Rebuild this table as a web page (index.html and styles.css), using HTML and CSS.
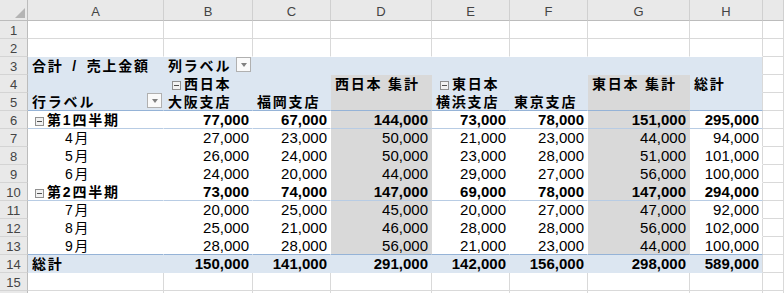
FILE: index.html
```html
<!DOCTYPE html>
<html lang="ja">
<head>
<meta charset="utf-8">
<title>ピボットテーブル</title>
<link rel="stylesheet" href="styles.css">
</head>
<body>
<div class="sheet">
  <div class="corner"><svg width="10" height="10" viewBox="0 0 10 10"><polygon points="10,0 10,10 0,10" fill="#b4b4b4"/></svg></div>
  <div class="ch">A</div><div class="ch">B</div><div class="ch">C</div><div class="ch">D</div><div class="ch">E</div><div class="ch">F</div><div class="ch">G</div><div class="ch">H</div><div class="ch"></div>

  <div class="rh">1</div>
  <div class="c"></div><div class="c"></div><div class="c"></div><div class="c"></div><div class="c"></div><div class="c"></div><div class="c"></div><div class="c"></div><div class="c"></div>

  <div class="rh">2</div>
  <div class="c nb"></div><div class="c nb"></div><div class="c nb"></div><div class="c nb"></div><div class="c nb"></div><div class="c nb"></div><div class="c nb"></div><div class="c nb"></div><div class="c"></div>

  <div class="rh">3</div>
  <div class="c pv blue lbl b sp">合計 / 売上金額</div>
  <div class="c pv blue lbl b fd"><span>列ラベル</span><span class="dd"></span></div>
  <div class="c pv blue"></div><div class="c pv blue"></div><div class="c pv blue"></div><div class="c pv blue"></div><div class="c pv blue"></div>
  <div class="c pv blue hr"></div>
  <div class="c"></div>

  <div class="rh">4</div>
  <div class="c pv blue"></div>
  <div class="c pv blue lbl b grp"><span class="tg"></span>西日本</div>
  <div class="c pv blue"></div>
  <div class="c pv gray lbl b">西日本 集計</div>
  <div class="c pv blue lbl b grp"><span class="tg"></span>東日本</div>
  <div class="c pv blue"></div>
  <div class="c pv gray lbl b">東日本 集計</div>
  <div class="c pv blue lbl b hr">総計</div>
  <div class="c"></div>

  <div class="rh">5</div>
  <div class="c pv blue lbl b fd ls"><span>行ラベル</span><span class="dd"></span></div>
  <div class="c pv blue lbl b ls">大阪支店</div>
  <div class="c pv blue lbl b ls">福岡支店</div>
  <div class="c pv gray ls"></div>
  <div class="c pv blue lbl b ls">横浜支店</div>
  <div class="c pv blue lbl b ls">東京支店</div>
  <div class="c pv gray ls"></div>
  <div class="c pv blue ls hr"></div>
  <div class="c"></div>

  <div class="rh">6</div>
  <div class="c pv lbl b q ll"><span class="tg"></span>第1四半期</div>
  <div class="c pv num b ll">77,000</div>
  <div class="c pv num b ll">67,000</div>
  <div class="c pv gray num b ll">144,000</div>
  <div class="c pv num b ll">73,000</div>
  <div class="c pv num b ll">78,000</div>
  <div class="c pv gray num b ll">151,000</div>
  <div class="c pv num b ll hr">295,000</div>
  <div class="c"></div>

  <div class="rh">7</div>
  <div class="c pv lbl m">4月</div>
  <div class="c pv num">27,000</div>
  <div class="c pv num">23,000</div>
  <div class="c pv gray num">50,000</div>
  <div class="c pv num">21,000</div>
  <div class="c pv num">23,000</div>
  <div class="c pv gray num">44,000</div>
  <div class="c pv num hr">94,000</div>
  <div class="c"></div>

  <div class="rh">8</div>
  <div class="c pv lbl m">5月</div>
  <div class="c pv num">26,000</div>
  <div class="c pv num">24,000</div>
  <div class="c pv gray num">50,000</div>
  <div class="c pv num">23,000</div>
  <div class="c pv num">28,000</div>
  <div class="c pv gray num">51,000</div>
  <div class="c pv num hr">101,000</div>
  <div class="c"></div>

  <div class="rh">9</div>
  <div class="c pv lbl m">6月</div>
  <div class="c pv num">24,000</div>
  <div class="c pv num">20,000</div>
  <div class="c pv gray num">44,000</div>
  <div class="c pv num">29,000</div>
  <div class="c pv num">27,000</div>
  <div class="c pv gray num">56,000</div>
  <div class="c pv num hr">100,000</div>
  <div class="c"></div>

  <div class="rh">10</div>
  <div class="c pv lbl b q ll"><span class="tg"></span>第2四半期</div>
  <div class="c pv num b ll">73,000</div>
  <div class="c pv num b ll">74,000</div>
  <div class="c pv gray num b ll">147,000</div>
  <div class="c pv num b ll">69,000</div>
  <div class="c pv num b ll">78,000</div>
  <div class="c pv gray num b ll">147,000</div>
  <div class="c pv num b ll hr">294,000</div>
  <div class="c"></div>

  <div class="rh">11</div>
  <div class="c pv lbl m">7月</div>
  <div class="c pv num">20,000</div>
  <div class="c pv num">25,000</div>
  <div class="c pv gray num">45,000</div>
  <div class="c pv num">20,000</div>
  <div class="c pv num">27,000</div>
  <div class="c pv gray num">47,000</div>
  <div class="c pv num hr">92,000</div>
  <div class="c"></div>

  <div class="rh">12</div>
  <div class="c pv lbl m">8月</div>
  <div class="c pv num">25,000</div>
  <div class="c pv num">21,000</div>
  <div class="c pv gray num">46,000</div>
  <div class="c pv num">28,000</div>
  <div class="c pv num">28,000</div>
  <div class="c pv gray num">56,000</div>
  <div class="c pv num hr">102,000</div>
  <div class="c"></div>

  <div class="rh">13</div>
  <div class="c pv lbl m ls">9月</div>
  <div class="c pv num ls">28,000</div>
  <div class="c pv num ls">28,000</div>
  <div class="c pv gray num ls">56,000</div>
  <div class="c pv num ls">21,000</div>
  <div class="c pv num ls">23,000</div>
  <div class="c pv gray num ls">44,000</div>
  <div class="c pv num ls hr">100,000</div>
  <div class="c"></div>

  <div class="rh">14</div>
  <div class="c pv blue lbl b">総計</div>
  <div class="c pv blue num b">150,000</div>
  <div class="c pv blue num b">141,000</div>
  <div class="c pv blue num b">291,000</div>
  <div class="c pv blue num b">142,000</div>
  <div class="c pv blue num b">156,000</div>
  <div class="c pv blue num b">298,000</div>
  <div class="c pv blue num b hr">589,000</div>
  <div class="c"></div>

  <div class="rh">15</div>
  <div class="c"></div><div class="c"></div><div class="c"></div><div class="c"></div><div class="c"></div><div class="c"></div><div class="c"></div><div class="c"></div><div class="c"></div>

  <div class="rh"></div>
  <div class="c"></div><div class="c"></div><div class="c"></div><div class="c"></div><div class="c"></div><div class="c"></div><div class="c"></div><div class="c"></div><div class="c"></div>
</div>
</body>
</html>
```

FILE: styles.css
```css
* { box-sizing: border-box; }
html, body { margin: 0; padding: 0; background: #fff; overflow: hidden; }

.sheet {
  display: grid;
  grid-template-columns: 28px 136px 89px 78px 101px 78px 78px 102px 73px 1fr;
  grid-template-rows: 21px repeat(16, 18px);
  width: 784px;
  height: 293px;
  overflow: hidden;
  font-family: "Liberation Sans", "Noto Sans CJK JP", sans-serif;
  color: #000;
}

.corner {
  background: #e9e9e9;
  border-right: 1px solid #bcbcbc;
  border-bottom: 1px solid #bcbcbc;
  display: flex;
  justify-content: flex-end;
  align-items: flex-end;
  padding: 0 2px 2px 0;
}

.ch {
  background: #e9e9e9;
  border-right: 1px solid #d0d0d0;
  border-bottom: 1px solid #bcbcbc;
  font-size: 13px;
  line-height: 16px;
  padding-top: 4px;
  text-align: center;
  color: #444;
}

.rh {
  background: #e9e9e9;
  border-right: 1px solid #bcbcbc;
  border-bottom: 1px solid #d4d4d4;
  font-size: 13px;
  line-height: 14px;
  padding-top: 3px;
  text-align: center;
  color: #444;
}

.c {
  border-right: 1px solid #d9d9d9;
  border-bottom: 1px solid #d9d9d9;
  display: flex;
  align-items: flex-start;
  white-space: nowrap;
  padding: 0 3px 0 4px;
  font-size: 15px;
  line-height: 17px;
}

.nb { border-bottom-color: transparent; }
.pv { border-color: transparent; }
.hr { border-right-color: #d9d9d9; }

.blue { background: #dce6f1; }
.gray { background: #d9d9d9; }
.b { font-weight: 700; }

.lbl { font-size: 14px; letter-spacing: 1.8px; padding-top: 2px; line-height: 15px; }
.sp { word-spacing: 3px; }
.num { justify-content: flex-end; padding-right: 3px; }
.q { padding-left: 7px; }
.grp { padding-left: 8px; }
.m { padding-left: 37px; }

.ls { border-bottom-color: #95b3d7; }
.ll { border-bottom-color: #b8cce4; }

.fd { justify-content: space-between; padding-right: 1px; padding-top: 0; }
.fd > span:first-child { padding-top: 2px; }

.dd {
  width: 15px;
  height: 15px;
  border: 1px solid #b0b0b0;
  background: #fafafa;
  display: flex;
  align-items: center;
  justify-content: center;
}
.dd::after {
  content: "";
  border-left: 3px solid transparent;
  border-right: 3px solid transparent;
  border-top: 4px solid #808080;
}

.tg {
  width: 9px;
  height: 9px;
  border: 1px solid #909090;
  background: #f2f2f2;
  display: flex;
  align-items: center;
  justify-content: center;
  margin: 4px 3px 0 0;
}
.tg::after {
  content: "";
  width: 5px;
  height: 1px;
  background: #505050;
}
```
